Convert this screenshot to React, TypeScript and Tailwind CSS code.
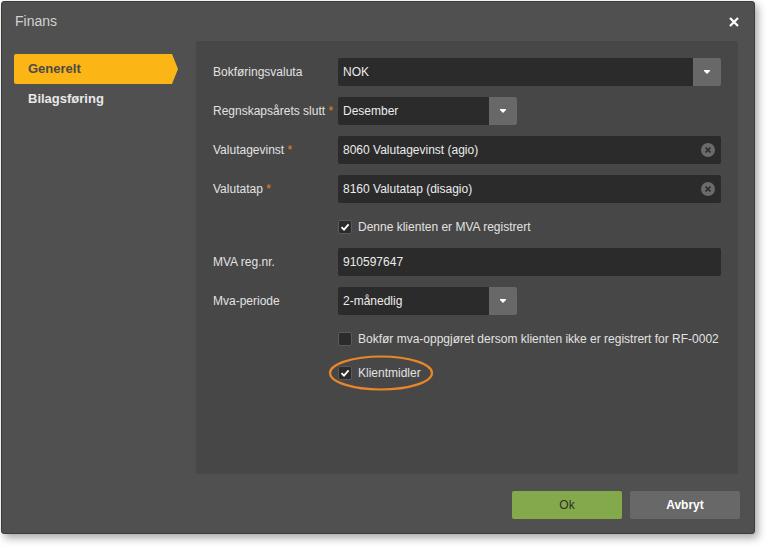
import React from "react";

const font = { fontFamily: '"Liberation Sans", Arial, sans-serif' };

function Caret() {
  return (
    <svg width="6" height="4" viewBox="0 0 6 4">
      <rect x="0" y="0" width="6" height="1" fill="#ffffff" />
      <polygon points="0,1 6,1 3,4" fill="#ffffff" />
    </svg>
  );
}

function Check() {
  return (
    <svg width="10" height="10" viewBox="0 0 10 10">
      <path d="M1.5 5.2 L4 7.6 L8.6 2.4" stroke="#ffffff" strokeWidth="1.8" fill="none" />
    </svg>
  );
}

function ClearIcon() {
  return (
    <span className="w-[14px] h-[14px] rounded-full bg-[#6b6b6b] flex items-center justify-center">
      <svg width="8" height="8" viewBox="0 0 8 8">
        <path d="M1.5 1.5 L6.5 6.5 M6.5 1.5 L1.5 6.5" stroke="#2b2b2b" strokeWidth="1.7" />
      </svg>
    </span>
  );
}

function Label({ text, req }: { text: string; req?: boolean }) {
  return (
    <div className="w-[125px] shrink-0 text-[12px] text-[#e2e2e2]">
      {text}
      {req && <span className="text-[#e08a1e]"> *</span>}
    </div>
  );
}

function Select({ value, wide }: { value: string; wide?: boolean }) {
  return (
    <div
      className={
        "h-[28px] flex bg-[#2b2b2b] rounded-[2px] " + (wide ? "w-[383px]" : "w-[179px]")
      }
    >
      <div className="flex-1 flex items-center pl-[5px] text-[12px] text-[#ececec]">{value}</div>
      <div className="w-[28px] bg-[#686868] rounded-r-[2px] flex items-center justify-center">
        <Caret />
      </div>
    </div>
  );
}

function Input({ value, clear }: { value: string; clear?: boolean }) {
  return (
    <div className="h-[28px] w-[383px] flex items-center bg-[#2b2b2b] rounded-[2px] pl-[5px] pr-[6px]">
      <div className="flex-1 text-[12px] text-[#ececec]">{value}</div>
      {clear && <ClearIcon />}
    </div>
  );
}

function Row({ children }: { children: React.ReactNode }) {
  return <div className="flex items-center">{children}</div>;
}

function CheckRow({ text, checked }: { text: string; checked?: boolean }) {
  return (
    <div className="flex items-center pl-[125px] h-[14px]">
      <div className="w-[14px] h-[14px] rounded-[2px] bg-[#2b2b2b] border border-[#5a5a5a] flex items-center justify-center">
        {checked && <Check />}
      </div>
      <span className="ml-[6px] text-[12px] text-[#e2e2e2]">{text}</span>
    </div>
  );
}

export default function App() {
  return (
    <div className="w-[768px] h-[548px] bg-white pt-px pl-px" style={font}>
      <div className="w-[754px] h-[533px] bg-[#505050] border border-[#3c3c3c] rounded-[3px] flex flex-col shadow-[3px_4px_8px_rgba(0,0,0,0.35)]">
        <div className="h-[39px] flex items-center justify-between pl-[13px] pr-[15px]">
          <span className="text-[14px] text-[#d2d2d2]">Finans</span>
          <svg width="10" height="10" viewBox="0 0 10 10">
            <path d="M1 1 L9 9 M9 1 L1 9" stroke="#ffffff" strokeWidth="2.2" />
          </svg>
        </div>
        <div className="flex pl-[12px] pr-[16px]">
          <div className="w-[164px] pt-[13px]">
            <div
              className="h-[30px] bg-[#fbb515] rounded-l-[2px] flex items-center pl-[14px] text-[13px] font-bold text-[#4a4a4a]"
              style={{ clipPath: "polygon(0 0, 158px 0, 164px 50%, 158px 100%, 0 100%)" }}
            >
              Generelt
            </div>
            <div className="h-[30px] flex items-center pl-[14px] text-[13px] font-bold text-[#e8e8e8]">
              Bilagsføring
            </div>
          </div>
          <div className="ml-[18px] w-[542px] h-[433px] bg-[#474747] rounded-[2px] pt-[17px] pl-[17px] flex flex-col">
            <Row>
              <Label text="Bokføringsvaluta" />
              <Select value="NOK" wide />
            </Row>
            <div className="mt-[11px]">
              <Row>
                <Label text="Regnskapsårets slutt" req />
                <Select value="Desember" />
              </Row>
            </div>
            <div className="mt-[11px]">
              <Row>
                <Label text="Valutagevinst" req />
                <Input value="8060 Valutagevinst (agio)" clear />
              </Row>
            </div>
            <div className="mt-[11px]">
              <Row>
                <Label text="Valutatap" req />
                <Input value="8160 Valutatap (disagio)" clear />
              </Row>
            </div>
            <div className="mt-[17px]">
              <CheckRow text="Denne klienten er MVA registrert" checked />
            </div>
            <div className="mt-[14px]">
              <Row>
                <Label text="MVA reg.nr." />
                <Input value="910597647" />
              </Row>
            </div>
            <div className="mt-[11px]">
              <Row>
                <Label text="Mva-periode" />
                <Select value="2-månedlig" />
              </Row>
            </div>
            <div className="mt-[17px]">
              <CheckRow text="Bokfør mva-oppgjøret dersom klienten ikke er registrert for RF-0002" />
            </div>
            <div className="mt-[20px] relative">
              <CheckRow text="Klientmidler" checked />
              <svg
                className="absolute left-[115px] top-[-11px] pointer-events-none"
                width="106"
                height="36"
                viewBox="0 0 106 36"
              >
                <ellipse cx="53" cy="18" rx="51" ry="16.5" fill="none" stroke="#e8862a" strokeWidth="2.2" />
              </svg>
            </div>
          </div>
        </div>
        <div className="flex justify-end gap-[8px] pr-[14px] mt-[17px]">
          <button className="w-[110px] h-[28px] bg-[#84a94a] rounded-[2px] text-[12px] text-[#2e2e2e]">
            Ok
          </button>
          <button className="w-[110px] h-[28px] bg-[#686868] rounded-[2px] text-[12px] font-bold text-white">
            Avbryt
          </button>
        </div>
      </div>
    </div>
  );
}
